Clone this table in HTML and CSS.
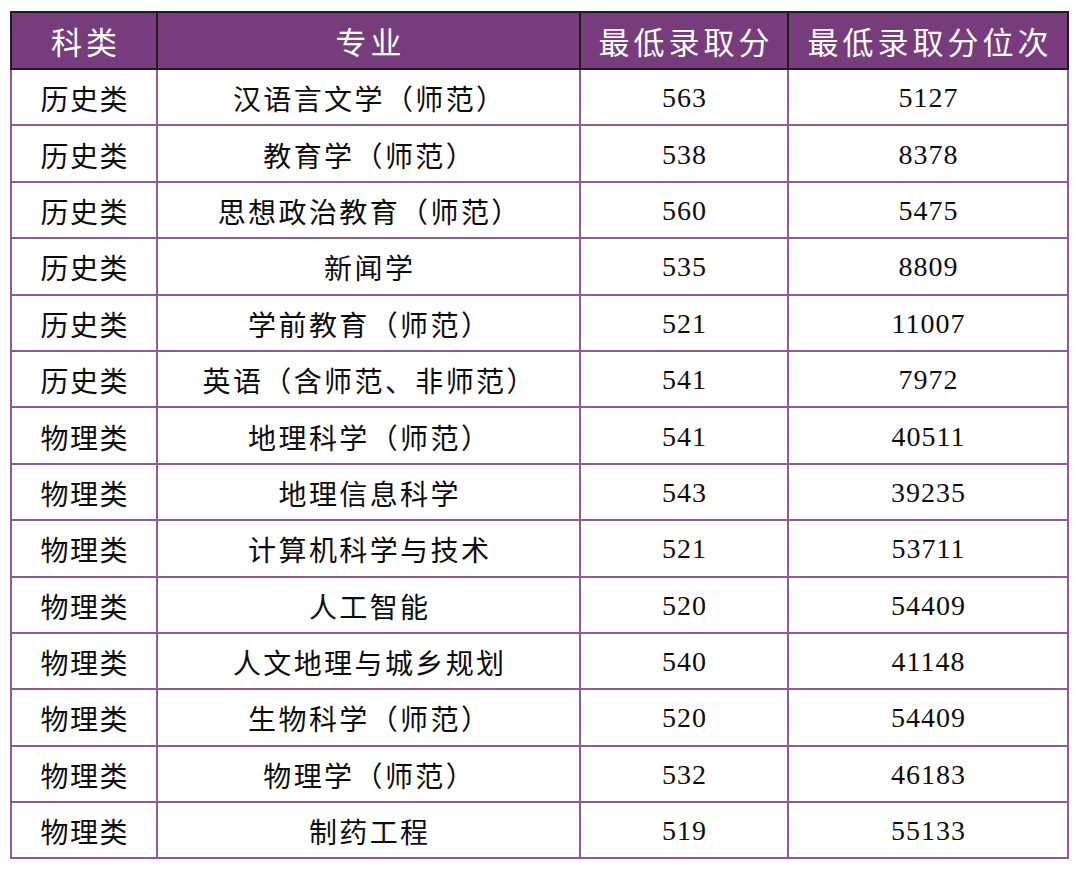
FILE: index.html
```html
<!DOCTYPE html>
<html lang="zh-CN">
<head>
<meta charset="utf-8">
<title>录取分数</title>
<link rel="stylesheet" href="styles.css">
</head>
<body>
<table class="score-table">
  <colgroup>
    <col class="c1"><col class="c2"><col class="c3"><col class="c4">
  </colgroup>
  <thead>
    <tr><th>科类</th><th>专业</th><th>最低录取分</th><th>最低录取分位次</th></tr>
  </thead>
  <tbody>
    <tr><td>历史类</td><td>汉语言文学（师范）</td><td>563</td><td>5127</td></tr>
    <tr><td>历史类</td><td>教育学（师范）</td><td>538</td><td>8378</td></tr>
    <tr><td>历史类</td><td>思想政治教育（师范）</td><td>560</td><td>5475</td></tr>
    <tr><td>历史类</td><td>新闻学</td><td>535</td><td>8809</td></tr>
    <tr><td>历史类</td><td>学前教育（师范）</td><td>521</td><td>11007</td></tr>
    <tr><td>历史类</td><td>英语（含师范、非师范）</td><td>541</td><td>7972</td></tr>
    <tr><td>物理类</td><td>地理科学（师范）</td><td>541</td><td>40511</td></tr>
    <tr><td>物理类</td><td>地理信息科学</td><td>543</td><td>39235</td></tr>
    <tr><td>物理类</td><td>计算机科学与技术</td><td>521</td><td>53711</td></tr>
    <tr><td>物理类</td><td>人工智能</td><td>520</td><td>54409</td></tr>
    <tr><td>物理类</td><td>人文地理与城乡规划</td><td>540</td><td>41148</td></tr>
    <tr><td>物理类</td><td>生物科学（师范）</td><td>520</td><td>54409</td></tr>
    <tr><td>物理类</td><td>物理学（师范）</td><td>532</td><td>46183</td></tr>
    <tr><td>物理类</td><td>制药工程</td><td>519</td><td>55133</td></tr>
  </tbody>
</table>
</body>
</html>
```

FILE: styles.css
```css
html, body {
  margin: 0;
  padding: 0;
  background: #ffffff;
}

body {
  padding: 11px 0 0 10px;
}

.score-table {
  border-collapse: collapse;
  table-layout: fixed;
  width: 1057px;
  font-family: "Liberation Serif", "Noto Sans CJK SC", serif;
  color: #0d0d0d;
}

.c1 { width: 146px; }
.c2 { width: 423px; }
.c3 { width: 208px; }
.c4 { width: 280px; }

.score-table th {
  background: #773c7b;
  color: #ffffff;
  font-family: "Noto Sans CJK SC", sans-serif;
  font-weight: 400;
  font-size: 31px;
  letter-spacing: 4px;
  text-indent: 4px;
  height: 55px;
  padding: 0;
  border: 2px solid #231a24;
  text-align: center;
  vertical-align: middle;
}

.score-table td {
  height: 52.4px;
  padding: 2px 0 0;
  font-size: 28px;
  letter-spacing: 1px;
  text-indent: 1px;
  text-align: center;
  vertical-align: middle;
  border: 2px solid #8e5c94;
}

.score-table td:first-child {
  letter-spacing: 1.5px;
  text-indent: 1.5px;
}

.score-table td:nth-child(2) {
  letter-spacing: 2.4px;
  text-indent: 2.4px;
}

.score-table tbody tr:first-child td {
  border-top: 2px solid #231a24;
}
```
